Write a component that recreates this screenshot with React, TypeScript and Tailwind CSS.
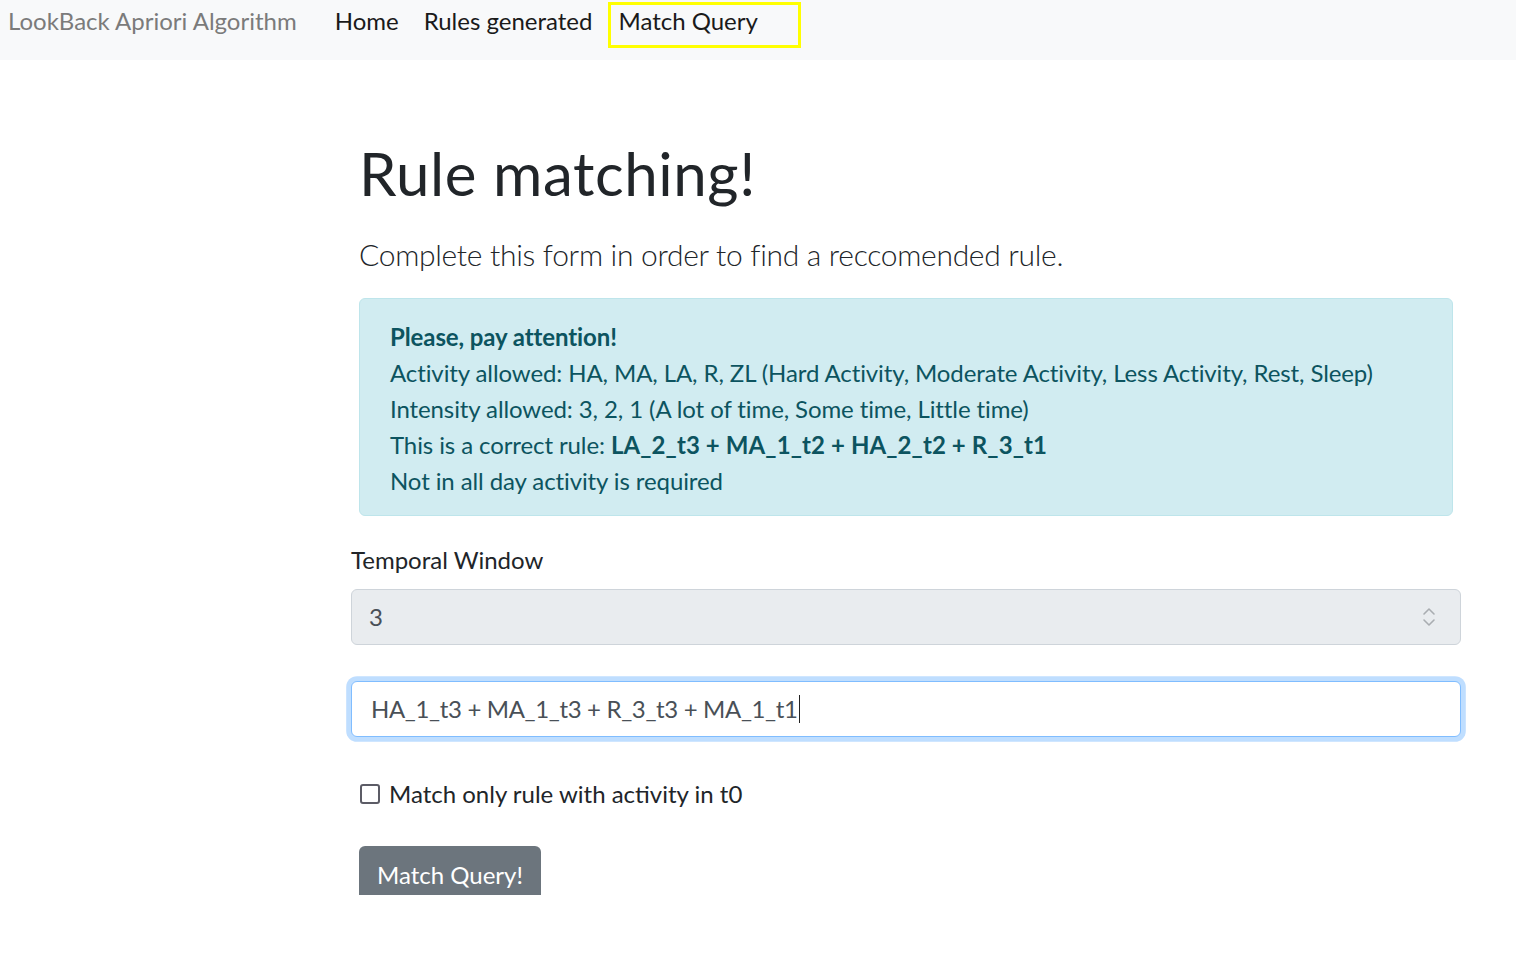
import React from 'react';

const font = { fontFamily: 'Lato, "Open Sans", sans-serif' };

const App = () => {
  return (
    <div className="min-h-screen bg-white text-[#212529]" style={font}>
      {/* Navbar */}
      <nav className="h-[60px] bg-[#f8f9fa] flex items-start text-[24px] leading-[36px]">
        <span className="ml-[8px] mt-[3px] text-[#7b7b7b]">LookBack Apriori Algorithm</span>
        <span className="ml-[38px] mt-[3px] text-[#1a1a1a]">Home</span>
        <span className="ml-[25px] mt-[3px] text-[#1a1a1a]">Rules generated</span>
        <span className="ml-[16px] mt-[2px] w-[193px] h-[46px] border-[3px] border-[#ffff00] pl-[7px] text-[#1a1a1a] leading-[32px]">
          Match Query
        </span>
      </nav>

      {/* Content */}
      <div className="ml-[351px] w-[1110px] pt-[77px]">
        <div className="pl-[8px] w-[1102px]">
          <h1 className="text-[60px] leading-[72px] font-normal tracking-[0.6px]">Rule matching!</h1>
          <p className="mt-[23px] text-[30px] leading-[45px] font-light tracking-[-0.3px]">
            Complete this form in order to find a reccomended rule.
          </p>

          <div className="mt-[21px] w-[1094px] bg-[#d1ecf1] border border-[#bee5eb] rounded-[6px] px-[30px] pt-[20px] pb-[16px] text-[#0c5460] text-[24px] leading-[36px] tracking-[-0.1px]">
            <div className="font-bold">Please, pay attention!</div>
            <div>Activity allowed: HA, MA, LA, R, ZL (Hard Activity, Moderate Activity, Less Activity, Rest, Sleep)</div>
            <div>Intensity allowed: 3, 2, 1 (A lot of time, Some time, Little time)</div>
            <div>
              This is a correct rule: <span className="font-bold tracking-[0.1px]">LA_2_t3 + MA_1_t2 + HA_2_t2 + R_3_t1</span>
            </div>
            <div>Not in all day activity is required</div>
          </div>
        </div>

        {/* Form */}
        <div className="mt-[26px] text-[24px] leading-[36px]">
          <label className="block">Temporal Window</label>
          <div className="mt-[11px] h-[56px] bg-[#e9ecef] border border-[#ced4da] rounded-[6px] flex items-center justify-between pl-[17px] pr-[24px] text-[#495057]">
            <span>3</span>
            <svg width="14" height="22" viewBox="0 0 14 22" fill="none" stroke="#a9adb1" strokeWidth="1.6" strokeLinecap="round" strokeLinejoin="round">
              <path d="M2 8 L7 3 L12 8" />
              <path d="M2 14 L7 19 L12 14" />
            </svg>
          </div>

          <div className="mt-[36px] h-[56px] bg-white border border-[#80bdff] rounded-[6px] shadow-[0_0_0_4.8px_rgba(0,123,255,0.25)] flex items-center pl-[19px] text-[#495057]">
            <span className="tracking-[-0.35px]">HA_1_t3 + MA_1_t3 + R_3_t3 + MA_1_t1</span>
            <span className="ml-[1px] w-[1px] h-[28px] bg-[#222]" />
          </div>

          <div className="mt-[39px] ml-[9px] flex items-center h-[36px]">
            <span className="w-[20px] h-[20px] border-[2.5px] border-[#5c5c66] rounded-[3px] bg-white" />
            <span className="ml-[9px] text-[#212529]">Match only rule with activity in t0</span>
          </div>

          <div className="mt-[34px] ml-[8px] h-[49px] overflow-hidden">
            <button className="w-[182px] h-[56px] bg-[#6c757d] text-white rounded-[6px] text-[24px] leading-[36px] pt-[2px]">
              Match Query!
            </button>
          </div>
        </div>
      </div>
    </div>
  );
};

export default App;
